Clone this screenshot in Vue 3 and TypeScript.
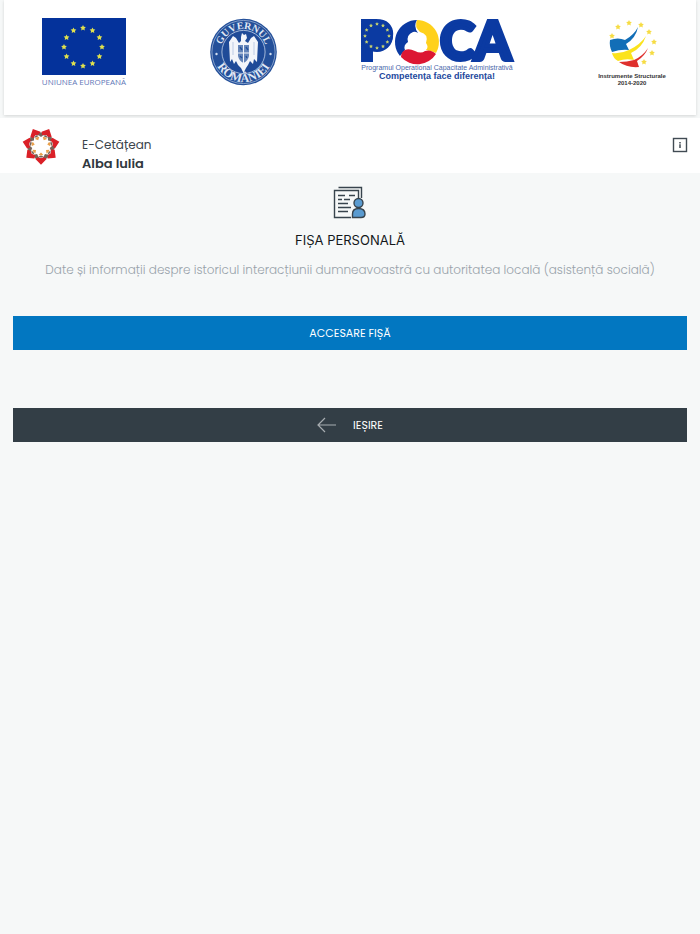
<script setup lang="ts">
interface Point {
  x: number
  y: number
}

function ring(count: number, cx: number, cy: number, radius: number): Point[] {
  return Array.from({ length: count }, (_, i) => {
    const a = ((-90 + (360 / count) * i) * Math.PI) / 180
    return { x: cx + radius * Math.cos(a), y: cy + radius * Math.sin(a) }
  })
}

function star(p: Point, r: number): string {
  return Array.from({ length: 10 }, (_, i) => {
    const a = ((-90 + 36 * i) * Math.PI) / 180
    const k = i % 2 === 0 ? r : r * 0.52
    return `${(p.x + k * Math.cos(a)).toFixed(2)},${(p.y + k * Math.sin(a)).toFixed(2)}`
  }).join(' ')
}

const flagStars = ring(12, 41, 29, 19).map((p) => star(p, 3))
const letterStars = ring(12, 17, 18, 12).map((p) => star(p, 2))
const fundStars: string[] = [
  { x: 14, y: 18 },
  { x: 20, y: 9 },
  { x: 31, y: 5 },
  { x: 43, y: 7 },
  { x: 51, y: 14 },
  { x: 56, y: 24 },
  { x: 54, y: 35 },
  { x: 46, y: 44 },
].map((p) => star(p, 3))
const petals = Array.from({ length: 7 }, (_, i) => 180 + (360 / 7) * i)
</script>

<template>
  <div class="page">
    <section class="banner">
      <svg class="logo" width="84" height="70" viewBox="0 0 84 70" role="img" aria-label="Uniunea Europeană">
        <rect width="84" height="57" fill="#04329b" />
        <polygon v-for="(s, i) in flagStars" :key="i" :points="s" fill="#dfe04e" />
        <text class="logo-text wide" x="42" y="67" text-anchor="middle" font-size="8" fill="#5f78b8">UNIUNEA EUROPEANĂ</text>
      </svg>

      <svg class="logo" width="67" height="70" viewBox="0 0 67 70" role="img" aria-label="Guvernul României">
        <defs>
          <path id="seal-top" d="M10.5 34 A23 23 0 0 1 56.5 34" />
          <path id="seal-bottom" d="M3.5 34 A30 30 0 0 0 63.5 34" />
        </defs>
        <circle cx="33.5" cy="34" r="33.3" fill="#24509a" />
        <circle cx="33.5" cy="34" r="31.6" fill="none" stroke="#c3d2e8" stroke-width="0.6" />
        <circle cx="33.5" cy="34" r="21.6" fill="#1f4b98" stroke="#c3d2e8" stroke-width="0.8" />
        <text class="seal-text" font-size="10" fill="#e0e8f4" text-anchor="middle">
          <textPath href="#seal-top" startOffset="50%">GUVERNUL</textPath>
        </text>
        <text class="seal-text" font-size="12" fill="#e0e8f4" text-anchor="middle">
          <textPath href="#seal-bottom" startOffset="50%">ROMÂNIEI</textPath>
        </text>
        <circle cx="6.5" cy="36" r="1.2" fill="#d5e0f0" />
        <circle cx="60.5" cy="36" r="1.2" fill="#d5e0f0" />
        <path
          d="M31 19 L32 15 L34 17 L36 16 L37 20 L35 23 L38 25 L41 20 L44 18 L48 24 L47 44 L44 41 L43 46 L40 43 L38 47 L36 50 L33.5 55 L31 50 L28 47 L26 43 L24 46 L22 41 L20 44 L19 24 L23 18 L26 20 L29 25 L31 23 Z"
          fill="#f2f5fa"
        />
        <path d="M28 27 H39 V38 Q38 43 33.5 45 Q29 43 28 38 Z" fill="#6485b9" />
        <path d="M33.5 27 V45 M28 35 H39" stroke="#f2f5fa" stroke-width="1" />
        <path d="M30 29 l2 3 M36 29 l2 3 M30 38 l2 2 M36 38 l1 2" stroke="#24509a" stroke-width="1.4" />
        <path d="M23 24 V37 M44 24 V37" stroke="#a8badb" stroke-width="0.7" />
      </svg>

      <svg class="logo" width="154" height="70" viewBox="0 0 154 70" role="img" aria-label="POCA">
        <text class="poca-letter" x="-1" y="42">P</text>
        <circle cx="17" cy="18" r="16" fill="#0b3aa2" />
        <polygon v-for="(s, i) in letterStars" :key="i" :points="s" fill="#c3cf70" />
        <path d="M57 2 A22 22 0 0 0 40 38 L45 32 Q43 27 48 24 Q46 17 53 14 Q55 13 58 15 Q53 8 57 2 Z" fill="#0b3aa2" />
        <path d="M57 2 A22 22 0 0 1 76 35 Q72 33 66 32 Q69 29 66 25 Q69 16 60 14 Q54 9 57 2 Z" fill="#ffd11b" />
        <path d="M41 39 A22 22 0 0 0 76 36 Q71 31 65 33 Q61 36 55 33 Q49 30 45 32 Q41 34 41 39 Z" fill="#dc1733" />
        <text class="poca-letter" x="80" y="42">C</text>
        <text class="poca-letter" x="114" y="42">A</text>
        <text class="logo-text" x="77" y="52" text-anchor="middle" font-size="7" fill="#4a68ab">Programul Operațional Capacitate Administrativă</text>
        <text class="logo-text" x="77" y="61" text-anchor="middle" font-size="9" font-weight="bold" fill="#23479d">Competența face diferența!</text>
      </svg>

      <svg class="logo" width="68" height="70" viewBox="0 0 68 70" role="img" aria-label="Instrumente Structurale 2014-2020">
        <polygon v-for="(s, i) in fundStars" :key="i" :points="s" fill="#f6dc43" />
        <path d="M12 22 Q20 19 27 22 Q36 17 40 9 Q38 20 28 26 L31 32 Q23 31 14 34 Q11 28 12 22 Z" fill="#126eb7" />
        <path d="M14 35 Q23 36 31 32 Q42 27 48 18 Q44 30 33 35 L36 42 Q28 40 20 43 Q15 40 14 35 Z" fill="#fbe31d" />
        <path d="M21 44 Q29 44 36 42 Q45 38 50 30 Q47 38 39 43 L41 49 Q29 50 21 44 Z" fill="#df302d" />
        <text class="logo-text" x="34" y="60" text-anchor="middle" font-size="6" font-weight="bold" fill="#333">Instrumente Structurale</text>
        <text class="logo-text" x="34" y="67" text-anchor="middle" font-size="6" font-weight="bold" fill="#333">2014-2020</text>
      </svg>
    </section>

    <header class="topbar">
      <svg class="crest" width="38" height="38" viewBox="-19 -19 38 38" aria-hidden="true">
        <g v-for="a in petals" :key="a" :transform="`rotate(${a})`">
          <path d="M0 -18.8 L-5.6 -13 L-3.8 -10.4 L0 -12.2 L3.8 -10.4 L5.6 -13 Z" fill="#da2027" />
          <path d="M0 -11.8 L-2.6 -10.4 L0 -9.6 L2.6 -10.4 Z" fill="#776358" />
          <path d="M0 -6.4 L-2.4 -9 L0 -9.6 L2.4 -9 Z" fill="#e9a04b" />
          <path d="M0 -14 L-3 -11.2 L0 -9 L3 -11.2 Z" fill="#776358" transform="rotate(25.7)" />
        </g>
      </svg>
      <div class="identity">
        <span class="app-name">E-Cetățean</span>
        <strong class="city">Alba Iulia</strong>
      </div>
      <button class="info" type="button" aria-label="Informații">
        <svg width="16" height="16" viewBox="0 0 16 16" aria-hidden="true">
          <rect x="1.5" y="1.5" width="13" height="13" fill="none" stroke="#414b53" stroke-width="1.4" />
          <path d="M8 5 V6.5 M8 7.2 V11" stroke="#414b53" stroke-width="1.5" />
        </svg>
      </button>
    </header>

    <main class="content">
      <svg class="file-icon" width="34" height="34" viewBox="0 0 34 34" fill="none" stroke="#38444d" stroke-width="1.4" aria-hidden="true">
        <path d="M5.5 1.5 H28.5 V12" />
        <path d="M18 31.5 H1.5 V4.5 H25.5 V12" />
        <path d="M5 9.5 H12 M16 9.5 H22 M5 13.5 H9 M11 13.5 H17 M5 17.5 H15 M5 21.5 H18 M5 25.5 H15" />
        <circle cx="25.5" cy="17" r="4.5" fill="#5a9bd0" />
        <path d="M19.5 31.5 V28 Q19.5 22.5 25.5 22.5 Q32 22.5 32 28 Q32 31.5 28 31.5 Z" fill="#5a9bd0" />
      </svg>
      <h1 class="title">FIȘA PERSONALĂ</h1>
      <p class="description">
        Date și informații despre istoricul interacțiunii dumneavoastră cu autoritatea locală (asistență socială)
      </p>
      <button class="action primary" type="button">ACCESARE FIȘĂ</button>
      <button class="action exit" type="button">
        <svg width="20" height="16" viewBox="0 0 20 16" fill="none" stroke="#a8adb1" stroke-width="1.2" aria-hidden="true">
          <path d="M19 8 H1 M8 1 L1 8 L8 15" />
        </svg>
        <span>IEȘIRE</span>
      </button>
    </main>
  </div>
</template>

<style>
body {
  margin: 0;
  background: #f6f8f8;
}
</style>

<style scoped>
.page {
  min-height: 100vh;
  background: #f6f8f8;
  font-family: Poppins, Inter, "Liberation Sans", sans-serif;
  color: #3b444b;
}

.banner {
  display: flex;
  justify-content: space-between;
  box-sizing: border-box;
  height: 115px;
  margin: 0 4px;
  padding: 18px 30px 0 38px;
  background: #fff;
  box-shadow: 0 1px 3px rgba(0, 0, 0, 0.14);
}

.logo {
  flex: none;
  overflow: visible;
}

.logo-text {
  font-family: "Liberation Sans", sans-serif;
}

.logo-text.wide {
  font-family: "Open Sans", "Liberation Sans", sans-serif;
}

.poca-letter {
  font-family: Lato, "Open Sans", sans-serif;
  font-size: 53px;
  font-weight: 900;
  fill: #0b3aa2;
  stroke: #0b3aa2;
  stroke-width: 4px;
}

.seal-text {
  font-family: "Liberation Serif", serif;
  font-weight: bold;
}

.topbar {
  display: flex;
  box-sizing: border-box;
  height: 55px;
  margin-top: 3px;
  padding: 9px 12px 0 22px;
  background: #fff;
}

.crest {
  flex: none;
}

.identity {
  display: flex;
  flex: 1;
  flex-direction: column;
  margin-left: 22px;
  padding-top: 8px;
  font-size: 12px;
  line-height: 19px;
}

.city {
  font-size: 13px;
  font-weight: 600;
  color: #30383e;
}

.info {
  align-self: flex-start;
  display: flex;
  margin-top: 10px;
  padding: 0;
  border: 0;
  background: none;
  cursor: pointer;
}

.content {
  display: flex;
  flex-direction: column;
  align-items: center;
  padding: 13px 13px 0;
}

.title {
  margin: 10px 0 0;
  font-family: Inter, "Liberation Sans", sans-serif;
  font-size: 13px;
  font-weight: 400;
  line-height: 20px;
  color: #14181b;
}

.description {
  margin: 10px 0 0;
  font-size: 12px;
  font-weight: 300;
  line-height: 20px;
  text-align: center;
  color: #98a2aa;
}

.action {
  display: flex;
  align-items: center;
  justify-content: center;
  gap: 16px;
  width: 100%;
  min-height: 34px;
  padding: 0;
  border: 0;
  font-family: inherit;
  font-size: 11px;
  color: #fff;
  cursor: pointer;
}

.primary {
  margin-top: 36px;
  background: #0277c1;
}

.exit {
  margin-top: 58px;
  background: #333e46;
}
</style>
